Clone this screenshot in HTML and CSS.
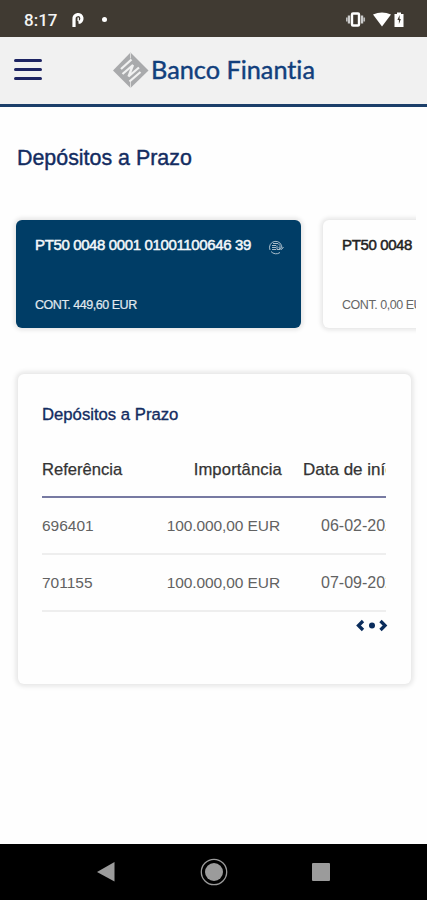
FILE: index.html
```html
<!DOCTYPE html>
<html lang="pt">
<head>
<meta charset="utf-8">
<title>Banco Finantia</title>
<link rel="stylesheet" href="styles.css">
</head>
<body>
<div class="status">
  <span class="time">8:17</span>
  <svg class="p-icon" width="14" height="16" viewBox="0 0 14 16"><path d="M3 15V7A4 4 0 1 1 7.500 10.500" fill="none" stroke="#fff" stroke-width="3.200"/><path d="M7.200 5.500v3.500" stroke="#fff" stroke-width="1.400"/></svg>
  <span class="dot"></span>
  <svg class="sys" width="60" height="18" viewBox="0 0 60 18">
    <rect x="6" y="3.500" width="7" height="12" rx="1" fill="none" stroke="#fff" stroke-width="2.400"/>
    <path d="M3 5.500v8M16 5.500v8" stroke="#ccc" stroke-width="2.400"/><path d="M.8 7.500v4M18.200 7.500v4" stroke="#bbb" stroke-width="1.700"/>
    <path d="M27 4.500Q36 .5 45 4.500L36 16.500Z" fill="#fff"/>
    <path d="M48.500 4h2.500V2.500h4V4h2.500v13h-9Z" fill="#fff"/><path d="M53.600 5v4h1.300l-2 5v-4h-1.500Z" fill="#403a32"/>
  </svg>
</div>
<header class="header">
  <div class="burger"><i></i><i></i><i></i></div>
  <svg class="logo" width="204" height="40" viewBox="0 0 204 40">
    <path d="M17.500 1.500L35.500 19.500L17.500 37L0 19.500Z" fill="#a9aaac"/>
    <path d="M8 18L18.500 8.500M9.500 23L20 14L15.500 25.500L26 16.500M16.500 30.500L27.500 21" fill="none" stroke="#f1f1f1" stroke-width="2.300"/>
    <path d="M17.500 1.500v6M17.500 37v-6" stroke="#dcdcdc" stroke-width="1"/>
    <text class="logo-text" x="38" y="28" textLength="164" lengthAdjust="spacingAndGlyphs">Banco Finantia</text>
  </svg>
</header>
<main>
  <h1>Depósitos a Prazo</h1>
  <div class="accounts">
    <section class="account active">
      <div class="iban">PT50 0048 0001 01001100646 39</div>
      <svg class="badge" width="16" height="16" viewBox="0 0 16 16" fill="none" stroke="#a9bdcb"><path d="M2 11A6.200 6.200 0 1 1 13.800 9.500M3 12.500A6.600 6.600 0 0 0 12 13.500M10.500 8.500l3 2L15.500 8"/><path d="M4 6.500h4M4 8.500h4M4 10.500h4M5 4.500h5l2 2v4H9V6.500"/></svg>
      <div class="balance">CONT. 449,60 EUR</div>
    </section>
    <section class="account">
      <div class="iban">PT50 0048</div>
      <div class="balance">CONT. 0,00 EUR</div>
    </section>
  </div>
  <section class="panel">
    <h2>Depósitos a Prazo</h2>
    <div class="table">
      <div class="row head"><span class="ref">Referência</span><span class="amount">Importância</span><span class="date">Data de início</span></div>
      <div class="row"><span class="ref">696401</span><span class="amount">100.000,00 EUR</span><span class="date">06-02-2020</span></div>
      <div class="row"><span class="ref">701155</span><span class="amount">100.000,00 EUR</span><span class="date">07-09-2020</span></div>
    </div>
    <svg class="pager" width="34" height="14" viewBox="0 0 34 14"><path d="M9 2L4.500 6.500 9 11M26.500 2L31 6.500 26.500 11" fill="none" stroke="#0a2c5c" stroke-width="3.300"/><circle cx="18" cy="6.500" r="3" fill="#0a2c5c"/></svg>
  </section>
</main>
<nav class="nav">
  <svg width="427" height="56" viewBox="0 0 427 56" fill="#9b9b9b"><path d="M97 28L114.500 18v19.500Z"/><circle cx="214" cy="28" r="9"/><circle cx="214" cy="28" r="12.700" fill="none" stroke="#9b9b9b" stroke-width="1.300"/><rect x="312" y="19" width="18" height="18" rx="1"/></svg>
</nav>
</body>
</html>
```
FILE: styles.css
```css
* { box-sizing: border-box; }
body {
  margin: 0;
  width: 427px;
  height: 900px;
  display: flex;
  flex-direction: column;
  overflow: hidden;
  background: #fefefe;
  font-family: "Liberation Sans", Arial, sans-serif;
}
.status {
  height: 37px;
  flex: none;
  display: flex;
  align-items: center;
  padding: 2px 21px 0 24px;
  background: #403a32;
}
.time {
  width: 47px;
  font: 500 17px Roboto, sans-serif;
  color: #f4f4f4;
}
.dot {
  width: 5px;
  height: 5px;
  margin-left: 17px;
  border-radius: 50%;
  background: #fff;
}
.sys { margin-left: auto; margin-top: -2px; }
.header {
  height: 70px;
  flex: none;
  display: flex;
  align-items: flex-start;
  padding: 14px 0 0 14px;
  background: #f1f1f1;
  border-bottom: 3px solid #1c3f6a;
}
.burger {
  width: 28px;
  display: flex;
  flex-direction: column;
  gap: 6px;
  padding-top: 8px;
}
.burger i {
  height: 3px;
  border-radius: 2px;
  background: #1d2463;
}
.logo { margin-left: 71px; }
.logo-text {
  font: 24.5px Lato, sans-serif;
  font-variant-ligatures: none;
  fill: #123f7c;
  stroke: #123f7c;
  stroke-width: .4px;
}
main { flex: 1; padding: 38px 0 0 16px; }
h1, h2 { margin: 0; font-weight: 400; color: #132c61; }
h1 {
  padding-left: 1px;
  font-size: 21.4px;
  line-height: 26px;
  -webkit-text-stroke: .4px;
}
.accounts {
  display: flex;
  gap: 22px;
  width: 408px;
  height: 124px;
  margin: 41px 0 0 -8px;
  padding: 8px 0 0 8px;
  overflow: hidden;
}
.account {
  position: relative;
  flex: none;
  width: 285px;
  height: 108px;
  padding: 15px 19px;
  border-radius: 6px;
  background: #fefefe;
  box-shadow: 0 0 4px 2px #e5e5e5;
  color: #222;
}
.active { background: #003d66; color: #f3f7fa; }
.iban {
  font-size: 15px;
  line-height: 20px;
  letter-spacing: -.37px;
  white-space: nowrap;
  -webkit-text-stroke: .5px;
}
.balance {
  margin-top: 41px;
  font-size: 12.5px;
  line-height: 18px;
  letter-spacing: -.46px;
  color: #666;
}
.active .balance { color: #e1e9ef; -webkit-text-stroke: .2px; }
.badge { position: absolute; right: 17px; top: 19px; }
.panel {
  width: 393px;
  height: 310px;
  margin: 38px 0 0 2px;
  padding: 30px 24px 0;
  border-radius: 6px;
  background: #fefefe;
  box-shadow: 0 0 5px 2px #e3e3e3;
}
h2 {
  font-size: 16.700px;
  line-height: 22px;
  -webkit-text-stroke: .35px;
}
.table { width: 344px; margin-top: 21px; overflow: hidden; }
.row {
  display: flex;
  align-items: center;
  height: 57px;
  border-bottom: 2px solid #eee;
  font-size: 15.500px;
  color: #626262;
  white-space: nowrap;
}
.row.head {
  height: 51px;
  padding-bottom: 4px;
  border-bottom: 2px solid #777aa2;
  font-size: 16.600px;
  color: #333;
  -webkit-text-stroke: .25px;
}
.ref { width: 100px; flex: none; }
.amount { width: 138px; flex: none; text-align: right; letter-spacing: -.1px; }
.head .amount { width: 140px; letter-spacing: .15px; }
.date { margin-left: 41px; font-size: 16px; }
.head .date { margin-left: 21px; font-size: 17px; }
.pager { display: block; margin: 7px 0 0 312px; }
.nav { height: 56px; flex: none; background: #000; }
.nav svg { display: block; }
```
